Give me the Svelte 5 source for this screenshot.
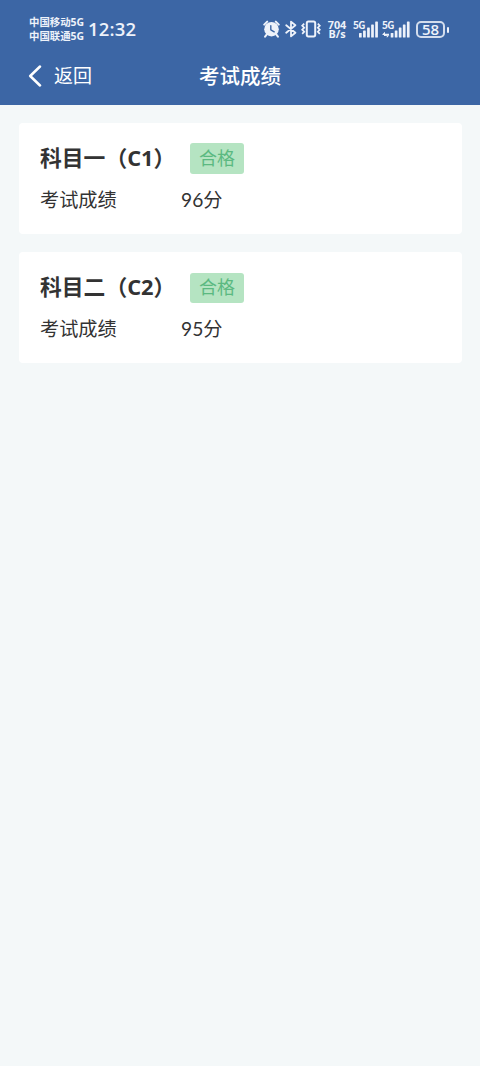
<script lang="ts">
  interface ExamResult {
    subject: string;
    license: string;
    status: string;
    score: number;
  }

  const results: ExamResult[] = [
    { subject: '科目一', license: 'C1', status: '合格', score: 96 },
    { subject: '科目二', license: 'C2', status: '合格', score: 95 },
  ];

  const carriers = ['中国移动5G', '中国联通5G'];
  const bars = [4.5, 7, 10, 13, 16];
</script>

<div class="page">
  <header>
    <div class="status-bar">
      <div class="carriers">
        {#each carriers as carrier}
          <span>{carrier}</span>
        {/each}
      </div>
      <span class="clock">12:32</span>

      <div class="indicators">
        <svg class="alarm" width="17" height="18" viewBox="0 0 17 18">
          <circle cx="8.5" cy="9.2" r="7.3" fill="currentColor" />
          <path d="M1.2 4.6 4.2 1.6M12.8 1.6l3 3M3.6 14.6l-1.5 2M13.4 14.6l1.5 2" stroke="currentColor" stroke-width="2" stroke-linecap="round" fill="none" />
          <path d="M7.8 5.8v4l3.4 2" stroke="#3c66a5" stroke-width="1.4" stroke-linecap="round" stroke-linejoin="round" fill="none" />
        </svg>
        <svg class="bluetooth" width="12" height="18" viewBox="0 0 12 18">
          <path d="M1.2 5.2 10.4 12.8 6 16.4V1.6l4.4 3.6L1.2 12.8" stroke="currentColor" stroke-width="1.8" stroke-linejoin="round" stroke-linecap="round" fill="none" />
        </svg>
        <svg class="vibrate" width="20" height="18" viewBox="0 0 20 18">
          <rect x="5.8" y="1.6" width="8.4" height="14.8" rx="1.6" stroke="currentColor" stroke-width="2" fill="none" />
          <path d="M3.2 3.6 1.2 5.7l2 2-2 2 2 2-2 2.1M16.8 3.6l2 2.1-2 2 2 2-2 2 2 2.1" stroke="currentColor" stroke-width="1.7" fill="none" />
        </svg>
        <div class="speed"><span>704</span><span>B/s</span></div>
        <div class="signal">
          <span class="network">5G</span>
          <svg width="25" height="18" viewBox="0 0 25 18">
            {#each bars as h, i}
              <rect x={6 + i * 4.05} y={17.5 - h} width="2.7" height={h} rx="0.6" fill="currentColor" />
            {/each}
          </svg>
        </div>
        <div class="signal">
          <span class="network">5G</span>
          <svg width="28" height="18" viewBox="0 0 28 18">
            {#each bars as h, i}
              <rect x={8.7 + i * 4.05} y={17.5 - h} width="2.7" height={h} rx="0.6" fill="currentColor" />
            {/each}
            <path d="M.4 14.3 3 11.8v1.9h4v1.2H.6zM7.4 15.3 4.8 17.8v-1.9H2v-1z" fill="currentColor" />
          </svg>
        </div>
        <div class="battery"><span>58</span></div>
      </div>
    </div>

    <nav>
      <button class="back">
        <svg width="14" height="22" viewBox="0 0 14 22">
          <path d="M12 1.5 2.2 11 12 20.5" stroke="currentColor" stroke-width="2.5" stroke-linecap="round" stroke-linejoin="round" fill="none" />
        </svg>
        <span>返回</span>
      </button>
      <h1>考试成绩</h1>
    </nav>
  </header>

  <main>
    {#each results as r}
      <section class="card">
        <div class="card-head">
          <h2>{r.subject}（{r.license}）</h2>
          <span class="badge">{r.status}</span>
        </div>
        <div class="row">
          <span class="label">考试成绩</span>
          <span>{r.score}分</span>
        </div>
      </section>
    {/each}
  </main>
</div>

<style>
  :global(body) { background: #f4f8f9; }

  .page {
    min-height: 100vh;
    background: #f4f8f9;
    font-family: Lato, 'Noto Sans CJK SC', sans-serif;
    color: #333;
  }

  header {
    height: 105px;
    background: #3c66a5;
    color: #fff;
  }

  .status-bar {
    display: flex;
    align-items: center;
    height: 48px;
    padding: 10px 35px 0 29px;
    box-sizing: border-box;
    color: #eef2fa;
    font-family: 'Open Sans', 'Noto Sans CJK SC', sans-serif;
  }

  .carriers {
    display: flex;
    flex-direction: column;
    width: 59px;
    font-size: 10.4px;
    font-weight: 700;
    line-height: 14.5px;
    white-space: nowrap;
  }

  .clock {
    font-size: 18.5px;
    font-weight: 600;
    line-height: 24px;
    letter-spacing: 0.2px;
  }

  .indicators {
    display: flex;
    align-items: center;
    margin-left: auto;
  }
  .indicators svg { display: block; }
  .bluetooth { margin-left: 5px; }
  .vibrate { margin-left: 4px; }

  .speed {
    display: flex;
    flex-direction: column;
    align-items: center;
    width: 20px;
    margin: 0 6px;
    font-size: 10.8px;
    font-weight: 700;
    line-height: 9px;
  }

  .signal { position: relative; }
  .signal + .signal { margin-left: 4px; }
  .network {
    position: absolute;
    top: 0;
    left: 0;
    font-family: 'Noto Sans CJK SC', sans-serif;
    font-size: 10px;
    font-weight: 700;
    line-height: 10px;
    letter-spacing: -0.7px;
  }

  .battery {
    position: relative;
    display: flex;
    align-items: center;
    justify-content: center;
    width: 29px;
    height: 17px;
    box-sizing: border-box;
    margin-left: 6px;
    border: 2px solid #d3dded;
    border-radius: 5px;
    font-size: 15px;
    font-weight: 600;
    line-height: 15px;
  }
  .battery::after {
    content: '';
    position: absolute;
    right: -6px;
    top: 4px;
    width: 2px;
    height: 6px;
    border-radius: 1px;
    background: currentColor;
  }

  nav {
    display: grid;
    grid-template-columns: 1fr auto 1fr;
    align-items: center;
    height: 56px;
  }

  .back {
    display: flex;
    align-items: center;
    gap: 12px;
    padding: 0 0 0 28px;
    border: 0;
    background: none;
    color: inherit;
    font: inherit;
    font-size: 19px;
    line-height: 28px;
  }

  h1 {
    margin: 0 0 2px;
    font-size: 20.5px;
    font-weight: 500;
    line-height: 30px;
    font-family: 'Noto Sans CJK SC', sans-serif;
  }

  main {
    display: flex;
    flex-direction: column;
    gap: 18px;
    padding: 18px 18px 18px 19px;
  }

  .card {
    height: 111px;
    box-sizing: border-box;
    padding: 20px 21px;
    background: #fff;
    border-radius: 4px;
  }

  .card-head {
    display: flex;
    align-items: flex-start;
    height: 31px;
  }

  h2 {
    width: 150px;
    margin: 0;
    font-family: 'Open Sans', 'Noto Sans CJK SC', sans-serif;
    font-size: 21.8px;
    font-weight: 700;
    line-height: 29px;
    white-space: nowrap;
  }

  .badge {
    width: 54px;
    height: 31px;
    border-radius: 3px;
    background: #b5e4c2;
    color: #5bb981;
    font-size: 18px;
    line-height: 30px;
    text-align: center;
  }
  .card + .card .badge {
    height: 30px;
    margin-top: 1px;
    line-height: 28px;
  }

  .row {
    display: flex;
    margin-top: 12px;
    font-size: 19.2px;
    line-height: 28px;
  }
  .label { width: 141px; }
</style>
